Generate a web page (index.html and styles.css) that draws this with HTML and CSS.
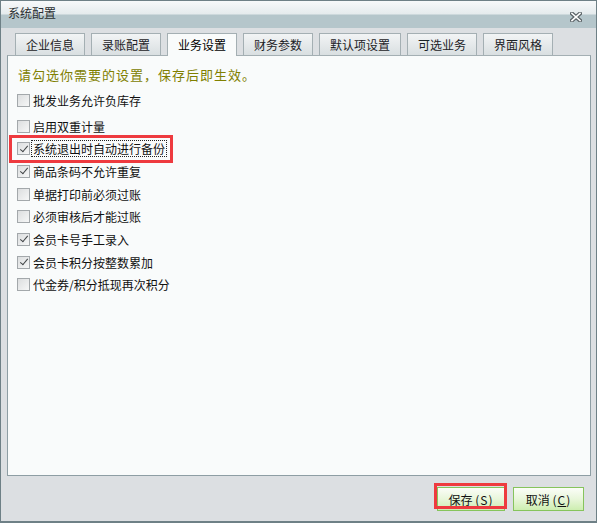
FILE: index.html
```html
<!DOCTYPE html>
<html lang="zh-CN">
<head>
    <meta charset="UTF-8">
    <title>系统配置</title>
    <link rel="stylesheet" href="styles.css">
</head>
<body>
    <div class="window">
        <div class="titlebar">
            <span class="title">系统配置</span>
            <svg class="close" width="12" height="10" viewBox="0 0 12 10">
                <path d="M2 1.5 L10 8.5 M10 1.5 L2 8.5" stroke="#5c6468" stroke-width="4" stroke-linecap="square"/>
                <path d="M2 1.5 L10 8.5 M10 1.5 L2 8.5" stroke="#ffffff" stroke-width="1.6" stroke-linecap="square"/>
            </svg>
        </div>

        <div class="tabs">
            <div class="tab">企业信息</div>
            <div class="tab">录账配置</div>
            <div class="tab active">业务设置</div>
            <div class="tab">财务参数</div>
            <div class="tab wide">默认项设置</div>
            <div class="tab">可选业务</div>
            <div class="tab">界面风格</div>
        </div>

        <div class="panel">
            <p class="hint">请勾选你需要的设置，保存后即生效。</p>
            <ul class="options">
                <li class="option first"><span class="box"></span><span class="label">批发业务允许负库存</span></li>
                <li class="option"><span class="box"></span><span class="label">启用双重计量</span></li>
                <li class="option marked"><span class="box checked"></span><span class="label focused">系统退出时自动进行备份</span></li>
                <li class="option"><span class="box checked"></span><span class="label">商品条码不允许重复</span></li>
                <li class="option"><span class="box"></span><span class="label">单据打印前必须过账</span></li>
                <li class="option"><span class="box"></span><span class="label">必须审核后才能过账</span></li>
                <li class="option"><span class="box checked"></span><span class="label">会员卡号手工录入</span></li>
                <li class="option"><span class="box checked"></span><span class="label">会员卡积分按整数累加</span></li>
                <li class="option"><span class="box"></span><span class="label">代金券/积分抵现再次积分</span></li>
            </ul>
        </div>

        <div class="footer">
            <button class="btn marked-btn" type="button">保存 <span class="key">(<u>S</u>)</span></button>
            <button class="btn" type="button">取消 <span class="key">(<u>C</u>)</span></button>
        </div>
    </div>
</body>
</html>
```

FILE: styles.css
```css
* {
    box-sizing: border-box;
}
body {
    margin: 0;
    font-family: "Noto Sans CJK SC", "DejaVu Sans", sans-serif;
    font-size: 12px;
    color: #111;
}

.window {
    width: 597px;
    height: 523px;
    border: 1px solid #6e8086;
    border-bottom-width: 2px;
    background: #dcdfe2;
    display: flex;
    flex-direction: column;
}

.titlebar {
    height: 27px;
    padding: 3px 14px 0 7px;
    display: flex;
    align-items: center;
    justify-content: space-between;
    background: linear-gradient(#f7f9fa 0, #e5ebed 13px, #b5c6cb 14px, #b5c6cb 100%);
}
.title {
    color: #2a2f31;
    line-height: 14px;
    margin-top: -6px;
}
.close {
    display: block;
    margin-top: 2px;
}

.tabs {
    display: flex;
    gap: 6px;
    padding: 5px 0 0 14px;
    height: 27px;
    position: relative;
    z-index: 1;
}
.tab {
    width: 70px;
    height: 22px;
    border: 1px solid #a4afb3;
    border-bottom: 0;
    background: linear-gradient(#f2f4f5, #d9dfe1);
    text-align: center;
    line-height: 21px;
    color: #1c2226;
}
.tab.wide {
    width: 82px;
}
.tab.active {
    height: 23px;
    background: #f9fbfb;
    color: #000;
}

.panel {
    margin: 0 5px 0 6px;
    height: 421px;
    border: 1px solid #8e9ea4;
    border-top-color: #a4afb3;
    background: #f9fbfb;
    padding: 9px 0 0 9px;
}
.hint {
    margin: 0 0 4px 1px;
    line-height: 20px;
    font-size: 13px;
    letter-spacing: 1px;
    color: #808000;
}

.options {
    list-style: none;
    margin: 0;
    padding: 0;
}
.option {
    display: flex;
    align-items: center;
    height: 22.7px;
    width: fit-content;
    position: relative;
}
.option.first {
    margin-bottom: 3px;
}
.box {
    width: 13px;
    height: 13px;
    border: 1px solid #a3a8ab;
    background: linear-gradient(135deg, #dcdedf, #f6f7f7);
    margin-right: 1px;
    position: relative;
}
.box.checked::after {
    content: "";
    position: absolute;
    left: 3.5px;
    top: 0.5px;
    width: 3px;
    height: 7px;
    border: solid #404446;
    border-width: 0 1.6px 1.6px 0;
    transform: rotate(40deg);
}
.label {
    padding: 0 1px;
    line-height: 15px;
    border: 1px solid transparent;
}
.label.focused {
    border: 1px dotted #222;
}
.option.marked::after {
    content: "";
    position: absolute;
    left: -8px;
    right: -6px;
    top: -2px;
    bottom: -3px;
    border: 3px solid #ee3a3f;
}

.footer {
    flex: 1;
    display: flex;
    justify-content: flex-end;
    align-items: flex-start;
    gap: 8px;
    padding: 11px 12px 0 0;
}
.btn {
    font-family: inherit;
    font-size: 12px;
    color: #111;
    height: 24px;
    width: 68px;
    border: 1px solid #86c45c;
    background: linear-gradient(#fbfdf8, #e8f6da 50%, #cdeeb0);
    padding: 0;
    position: relative;
}
.btn + .btn {
    width: 71px;
}
.key {
    letter-spacing: 1px;
}
.marked-btn::after {
    content: "";
    position: absolute;
    left: -4px;
    right: -3px;
    top: -5px;
    bottom: 1px;
    border: 3px solid #ee3a3f;
}
```
